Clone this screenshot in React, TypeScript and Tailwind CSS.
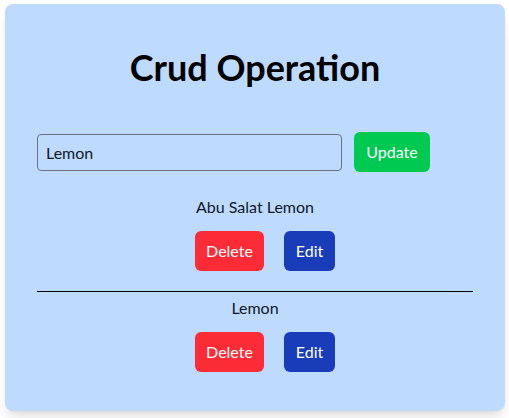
import React from "react";

type Item = { id: number; name: string };

const App = () => {
  const [items] = React.useState<Item[]>([
    { id: 1, name: "Abu Salat Lemon" },
    { id: 2, name: "Lemon" },
  ]);
  const [text, setText] = React.useState("Lemon");

  return (
    <div className="min-h-screen w-full bg-white font-['Lato',sans-serif] pt-1 px-[5px]">
      <div className="w-[500px] bg-blue-200 rounded-lg shadow-lg px-8 pt-[43px] pb-[39px]">
        <h1 className="text-center text-4xl font-bold text-black leading-10">
          Crud Operation
        </h1>
        <div className="flex items-center gap-3 mt-[45px]">
          <input
            type="text"
            value={text}
            onChange={(e) => setText(e.target.value)}
            className="w-[305px] h-[37px] px-2 text-base text-gray-900 bg-transparent border border-gray-500 rounded outline-none"
          />
          <button className="h-10 w-[76px] bg-green-500 text-white text-base rounded-md">
            Update
          </button>
        </div>
        <div className="mt-[23px]">
          {items.map((item, i) => (
            <div key={item.id}>
              {i > 0 && <div className="border-t border-black mt-5 mb-[4px]" />}
              <p className="text-center text-base leading-6 text-gray-900">{item.name}</p>
              <div className="flex justify-center mt-3">
                <button className="ml-5 h-10 w-[69px] bg-red-500 text-white text-base rounded-md">
                  Delete
                </button>
                <button className="ml-5 h-10 w-[51px] bg-blue-800 text-white text-base rounded-md">
                  Edit
                </button>
              </div>
            </div>
          ))}
        </div>
      </div>
    </div>
  );
};

export default App;
